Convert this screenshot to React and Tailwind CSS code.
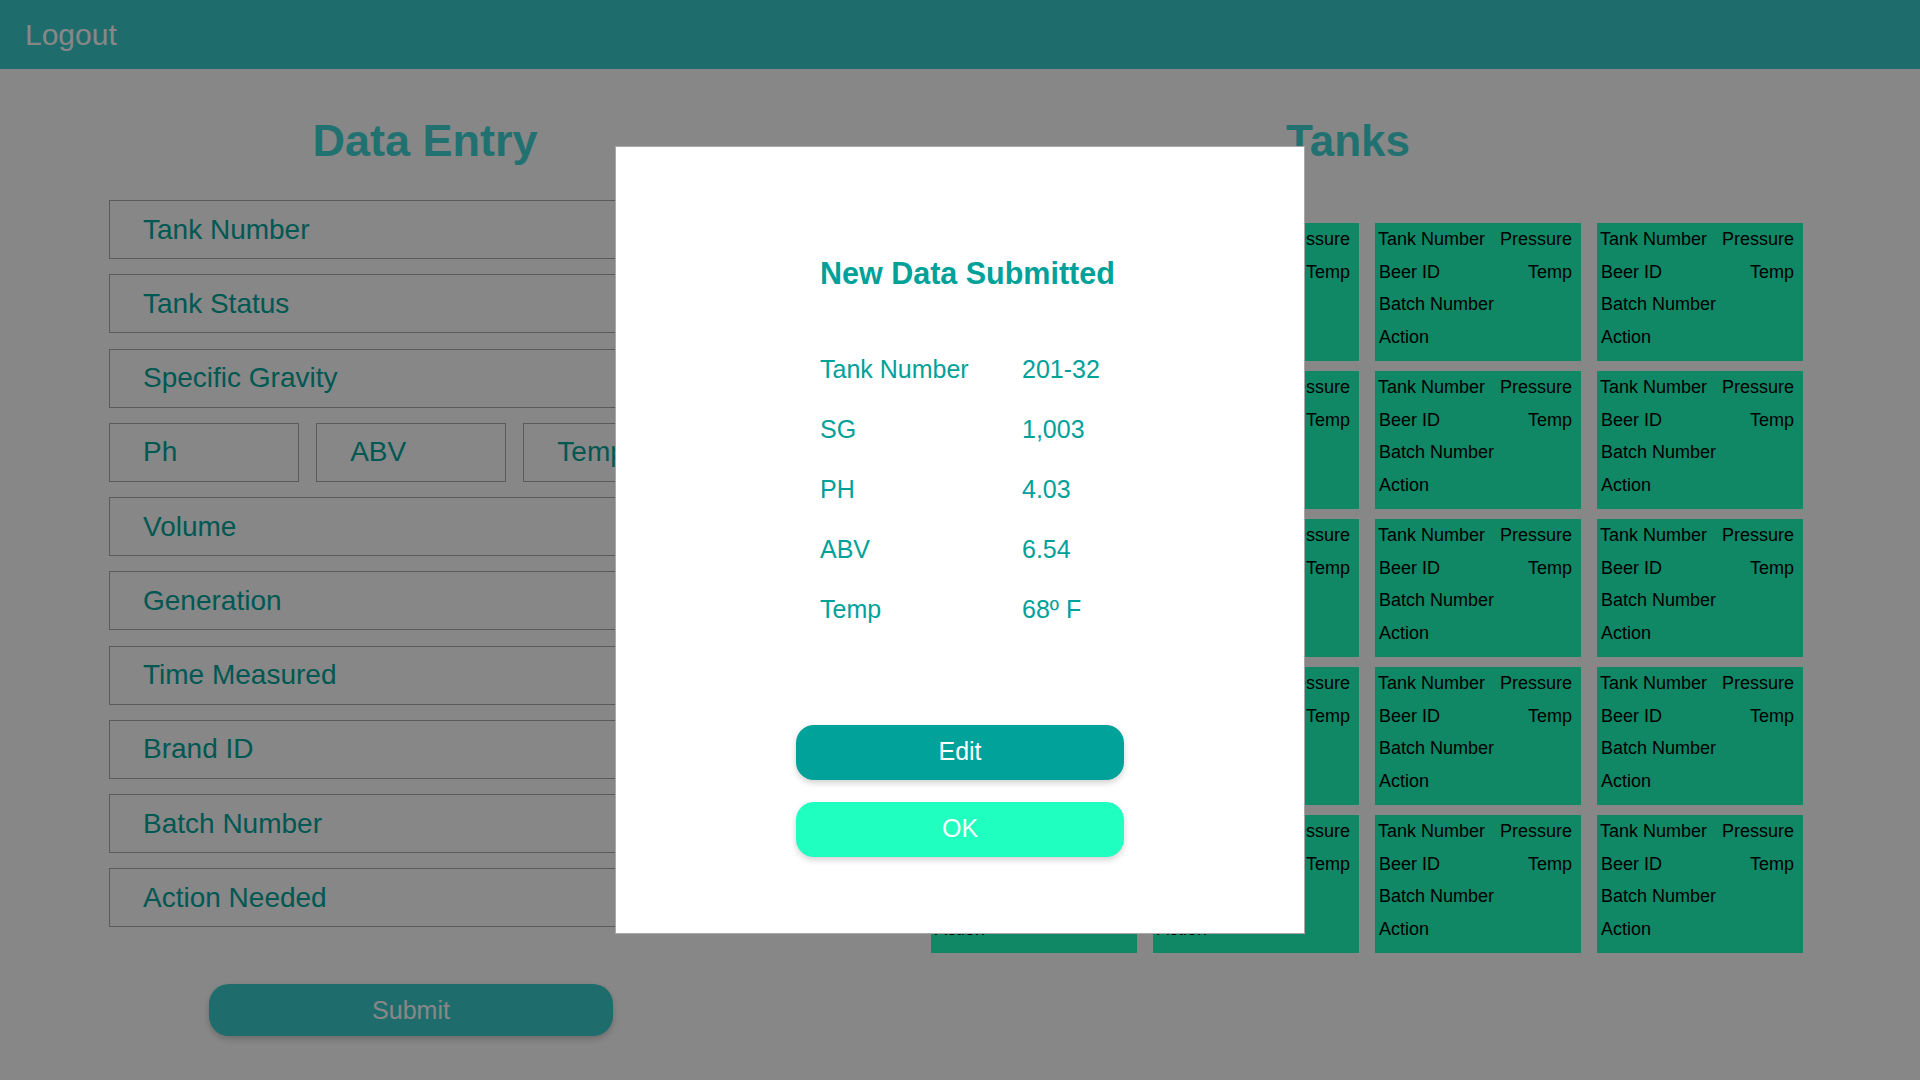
import React from "react";

const fields = ["Tank Number", "Tank Status", "Specific Gravity"];
const fields2 = ["Volume", "Generation", "Time Measured", "Brand ID", "Batch Number", "Action Needed"];
const summary = [
  ["Tank Number", "201-32"],
  ["SG", "1,003"],
  ["PH", "4.03"],
  ["ABV", "6.54"],
  ["Temp", "68º F"],
];

function Field({ label, className = "" }) {
  return (
    <div className={`flex h-[59px] items-center border border-[#aaaaaa] pl-[33px] text-[28px] text-[#00a69d] ${className}`}>
      {label}
    </div>
  );
}

function TankCard() {
  return (
    <div className="h-[138px] bg-[#1fffbf] pl-[3px] pr-[9px] text-[18px] leading-[32.5px] text-black">
      <div className="flex justify-between">
        <span>Tank Number</span>
        <span>Pressure</span>
      </div>
      <div className="flex justify-between pl-[1px]">
        <span>Beer ID</span>
        <span>Temp</span>
      </div>
      <div className="pl-[1px]">Batch Number</div>
      <div className="pl-[1px]">Action</div>
    </div>
  );
}

export default function App() {
  return (
    <div className="relative h-screen w-full overflow-hidden bg-white font-['Liberation_Sans',Arial,sans-serif]">
      <header className="flex h-[69px] items-center bg-[#3ccccc] pl-[25px]">
        <span className="text-[30px] text-white">Logout</span>
      </header>

      <main className="flex">
        {/* data entry form */}
        <section className="ml-[109px] w-[604px]">
          <h1 className="mt-[49px] pl-[28px] text-center text-[45px] font-bold leading-none text-[#3fd6d6]">Data Entry</h1>
          <div className="mt-[37px] flex flex-col gap-[15.25px]">
            {fields.map((f) => (
              <Field key={f} label={f} />
            ))}
            <div className="flex gap-[17.5px]">
              <Field label="Ph" className="w-[190px]" />
              <Field label="ABV" className="w-[190px]" />
              <Field label="Temp" className="w-[190px]" />
            </div>
            {fields2.map((f) => (
              <Field key={f} label={f} />
            ))}
          </div>
          <button className="mx-auto mt-[57px] flex h-[52px] w-[404px] items-center justify-center rounded-[20px] bg-[#3ccccc] text-[25px] text-white shadow-[0_3px_6px_rgba(0,0,0,0.2)]">
            Submit
          </button>
        </section>

        {/* tanks grid */}
        <section className="ml-[218px] w-[872px]">
          <h1 className="mt-[50px] pr-[38px] text-center text-[44px] font-bold leading-none text-[#3fd6d6]">Tanks</h1>
          <div className="mt-[60px] grid grid-cols-4 gap-x-[16px] gap-y-[10px]">
            {Array.from({ length: 20 }).map((_, i) => (
              <TankCard key={i} />
            ))}
          </div>
        </section>
      </main>

      {/* modal */}
      <div className="absolute inset-0 flex items-center justify-center bg-black/[0.47]">
        <div className="h-[788px] w-[690px] border border-[#a8a8a8] bg-white">
          <div className="pl-[204px] pt-[111px]">
            <h2 className="text-[30.5px] font-bold leading-none text-[#00a199]">New Data Submitted</h2>
            <div className="mt-[50px]">
              {summary.map(([k, v]) => (
                <div key={k} className="flex text-[25px] leading-[60px] text-[#00a199]">
                  <span className="w-[202px]">{k}</span>
                  <span>{v}</span>
                </div>
              ))}
            </div>
          </div>
          <div className="mt-[86px] flex flex-col items-center gap-[22px]">
            <button className="h-[55px] w-[328px] rounded-[18px] bg-[#00a29a] text-[25px] text-white shadow-[0_3px_6px_rgba(0,0,0,0.18)]">
              Edit
            </button>
            <button className="h-[55px] w-[328px] rounded-[18px] bg-[#1fffbf] text-[25px] text-white shadow-[0_3px_6px_rgba(0,0,0,0.18)]">
              OK
            </button>
          </div>
        </div>
      </div>
    </div>
  );
}
